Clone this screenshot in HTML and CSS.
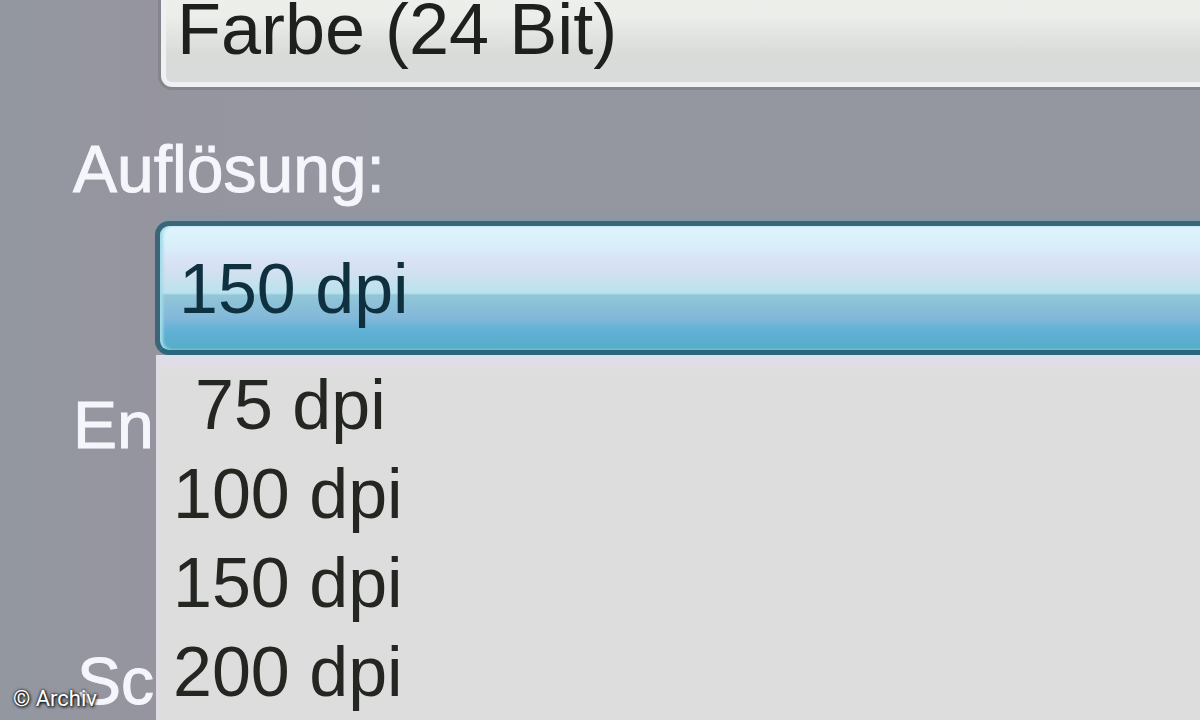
FILE: index.html
```html
<!DOCTYPE html>
<html lang="de">
<head>
<meta charset="utf-8">
<title>Scannen</title>
<link rel="stylesheet" href="styles.css">
</head>
<body>
<main class="page">
<form class="settings">
  <div class="field field-first">
    <select class="control" aria-label="Farbe">
      <option>Farbe (24 Bit)</option>
    </select>
  </div>
  <div class="field">
    <label class="label" for="resolution">Auflösung:</label>
    <div class="combo">
      <select class="control control-active" id="resolution">
        <option>150 dpi</option>
      </select>
      <ul class="menu" role="listbox" aria-label="Auflösung">
        <li class="item item-short" role="option">75 dpi</li>
        <li class="item" role="option">100 dpi</li>
        <li class="item" role="option" aria-selected="true">150 dpi</li>
        <li class="item" role="option">200 dpi</li>
      </ul>
    </div>
  </div>
  <div class="field field-covered"><span class="label">En</span></div>
  <div class="field field-covered"><span class="label label-indent">Sc</span></div>
</form>
<small class="credit">© Archiv</small>
</main>
</body>
</html>
```
FILE: styles.css
```css
* { box-sizing: border-box; }

body {
  margin: 0;
  background: #9496a0;
  font-family: "Liberation Sans", Arial, sans-serif;
}

.page {
  position: relative;
  height: 100vh;
  overflow: hidden;
}

.settings {
  display: flex;
  flex-direction: column;
  margin-top: -46px;
  background: linear-gradient(90deg, #9297a0 0, #96959f 140px, #9496a0 400px);
}

.field {
  display: flex;
  flex-direction: column;
}

.field-first { padding: 0 0 9px 158px; }
.field-covered { padding-bottom: 134px; }

.label {
  height: 122px;
  padding: 32px 0 0 73px;
  color: #f5f5fc;
  font-size: 66px;
  line-height: 76px;
  -webkit-text-stroke: 1px #f5f5fc;
}

.label-indent { padding-left: 77px; }

.combo {
  position: relative;
  margin-left: 155px;
}

.control {
  appearance: none;
  display: block;
  width: calc(100% + 24px);
  height: 136px;
  margin: 0;
  padding: 14px 16px 0;
  border: 3px solid #85858c;
  border-radius: 14px;
  background: linear-gradient(#f2f2f2 0, #eceeea 45%, #d9dbd9 75%, #dadadc 100%);
  box-shadow: inset 0 0 0 5px #f0eff4;
  color: #1e201e;
  font: 72px "Liberation Sans", Arial, sans-serif;
  outline: none;
}

.control-active {
  height: 134px;
  padding: 2px 19px 0;
  border: 5px solid #3b6678;
  border-bottom-color: #2b677c;
  background: linear-gradient(#def4ff 0, #d8effa 16%, #d9e2f5 28%, #cfe0ef 40%, #b9e2ee 54%, #92c6d7 56%, #83b8da 74%, #62b0d6 84%, #55acc6 100%);
  box-shadow: 0 -8px 6px -4px #8998a6, inset 3px 0 3px #a4dbe8;
  color: #0e303f;
  font-size: 70px;
}

.menu {
  position: absolute;
  top: 100%;
  left: 1px;
  width: 100%;
  margin: 0;
  padding: 6px 0 8px;
  border-left: 3px solid #dfdce3;
  background: linear-gradient(#dbe0ee 0, #e1dce2 10px, #dddddd 20px);
  list-style: none;
}

.item {
  height: 89px;
  padding-left: 14px;
  color: #242622;
  font-size: 70px;
  line-height: 89px;
}

.item-short { padding-left: 36px; }

.credit {
  position: absolute;
  bottom: 8px;
  left: 13px;
  color: #fff;
  font: 22px/26px Roboto, sans-serif;
  text-shadow: 0 0 3px #000, 1px 1px 3px #000;
}
```
